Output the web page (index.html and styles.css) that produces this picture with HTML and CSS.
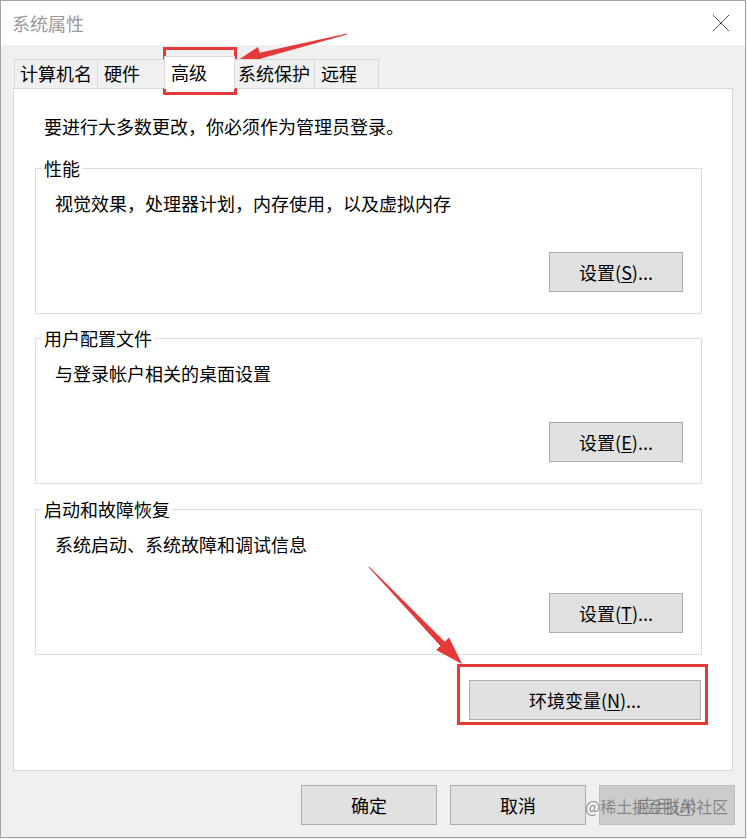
FILE: index.html
```html
<!DOCTYPE html>
<html lang="zh-CN">
<head>
<meta charset="utf-8">
<title>系统属性</title>
<link rel="stylesheet" href="styles.css">
</head>
<body>
<div class="window">
  <div class="titlebar">
    <span class="title">系统属性</span>
    <svg class="close" width="18" height="18" viewBox="0 0 18 18"><path d="M1 1 L17 17 M17 1 L1 17" stroke="#555" stroke-width="1" fill="none"/></svg>
  </div>
  <div class="client">
    <div class="tabs">
      <div class="tab t1">计算机名</div>
      <div class="tab t2">硬件</div>
      <div class="tab t3 active">高级</div>
      <div class="tab t4">系统保护</div>
      <div class="tab t5">远程</div>
    </div>
    <div class="panel">
      <p class="note">要进行大多数更改，你必须作为管理员登录。</p>
      <fieldset class="group first">
        <legend>性能</legend>
        <p class="desc">视觉效果，处理器计划，内存使用，以及虚拟内存</p>
        <div class="actions"><button class="btn">设置(<u>S</u>)...</button></div>
      </fieldset>
      <fieldset class="group">
        <legend>用户配置文件</legend>
        <p class="desc">与登录帐户相关的桌面设置</p>
        <div class="actions"><button class="btn">设置(<u>E</u>)...</button></div>
      </fieldset>
      <fieldset class="group g3">
        <legend>启动和故障恢复</legend>
        <p class="desc">系统启动、系统故障和调试信息</p>
        <div class="actions"><button class="btn">设置(<u>T</u>)...</button></div>
      </fieldset>
      <div class="env-row"><button class="btn env">环境变量(<u>N</u>)...</button></div>
    </div>
    <div class="footer">
      <button class="btn foot">确定</button>
      <button class="btn foot">取消</button>
      <button class="btn foot disabled" disabled>应用(<u>A</u>)</button>
    </div>
  </div>
  <div class="watermark">@稀土掘金技术社区</div>
  <svg class="annotations" width="747" height="839" viewBox="0 0 747 839">
    <rect x="164.5" y="48.5" width="71" height="45" fill="none" stroke="#e53a3a" stroke-width="3"/>
    <rect x="458.5" y="665.5" width="248" height="58" fill="none" stroke="#e53a3a" stroke-width="3"/>
    <polygon fill="#e53a3a" points="346.9,33.5 259.5,52.8 258,47 235,62 262.4,64.4 260.9,58.6 347.1,34.5"/>
    <polygon fill="#e53a3a" points="368.6,567.3 440.4,645.9 436.1,650 462,664 449.1,637.6 444.8,641.7 369.4,566.7"/>
  </svg>
</div>
</body>
</html>
```

FILE: styles.css
```css
* { box-sizing: border-box; }
html, body { margin: 0; padding: 0; background: #f0f0f0; }
body {
  font-family: "Noto Sans CJK SC", "Microsoft YaHei", sans-serif;
  font-size: 18px;
  color: #000;
}
.window {
  position: relative;
  width: 746px;
  height: 838px;
  border: 1px solid #a3a3a3;
  background: #f0f0f0;
  display: flex;
  flex-direction: column;
}
.titlebar {
  height: 44px;
  background: #fff;
  display: flex;
  align-items: center;
  justify-content: space-between;
  padding: 0 15px 0 11px;
}
.title { color: #9a9a9a; line-height: 24px; }
.close { display: block; margin-top: 0; }
.client { flex: 1; display: flex; flex-direction: column; }
.tabs {
  display: flex;
  align-items: flex-end;
  margin-top: 11px;
  padding-left: 13px;
  height: 32px;
  position: relative;
  z-index: 1;
}
.tab {
  height: 29px;
  border: 1px solid #d9d9d9;
  border-bottom: none;
  background: #f0f0f0;
  padding-left: 5px;
  line-height: 26px;
  margin-left: -1px;
  white-space: nowrap;
}
.t1 { width: 84px; margin-left: 0; }
.t2 { width: 68px; padding-left: 6px; }
.t3 { width: 71px; padding-left: 6px; }
.t4 { width: 81px; padding-left: 3px; }
.t5 { width: 65px; padding-left: 6px; }
.tab.active {
  height: 33px;
  background: #fff;
  margin-bottom: -1px;
  line-height: 30px;
  position: relative;
  z-index: 2;
}
.panel {
  margin-left: 12px;
  width: 720px;
  height: 683px;
  background: #fff;
  border: 1px solid #d9d9d9;
  padding: 0 30px 0 21px;
}
.note {
  margin: 25px 0 0 9px;
  line-height: 24px;
}
.group {
  margin: 15px 0 0 0;
  padding: 0 0 21px 0;
  border: 1px solid #dcdcdc;
  min-width: 0;
}
.group.first { margin-top: 21px; }
.group.g3 { margin-top: 16px; }
.group legend {
  margin-left: 6px;
  padding: 0 2px;
  line-height: 18px;
}
.desc {
  margin: 14px 0 0 0;
  padding-left: 19px;
  line-height: 24px;
}
.actions {
  display: flex;
  justify-content: flex-end;
  margin-top: 37px;
  padding-right: 18px;
}
.btn {
  font-family: inherit;
  font-size: 18px;
  color: #000;
  width: 134px;
  height: 40px;
  background: #e1e1e1;
  border: 1px solid #adadad;
  padding: 0;
  line-height: 24px;
}
.btn u { text-underline-offset: 2px; }
.env-row {
  display: flex;
  justify-content: flex-end;
  margin-top: 25px;
  padding-right: 1px;
}
.btn.env { width: 232px; }
.footer {
  display: flex;
  justify-content: flex-end;
  gap: 13px;
  margin-top: 14px;
  padding-right: 10px;
}
.btn.foot { width: 136px; }
.btn.disabled {
  background: #cccccc;
  border-color: #bfbfbf;
  color: #8a8a8a;
}
.watermark {
  position: absolute;
  left: 584px;
  top: 794px;
  font-size: 16px;
  line-height: 22px;
  color: rgba(110, 110, 110, 0.75);
  pointer-events: none;
}
.annotations {
  position: absolute;
  left: -1px;
  top: -1px;
  pointer-events: none;
}
```
